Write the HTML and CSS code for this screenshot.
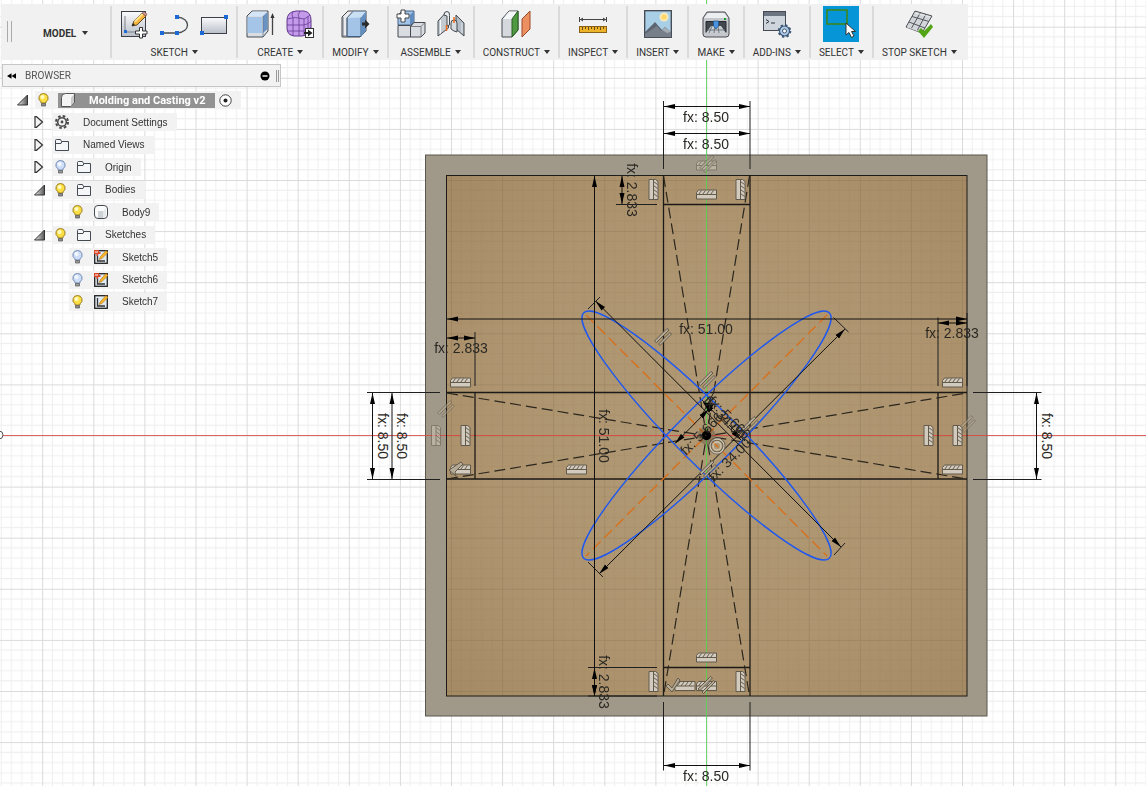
FILE: index.html
```html
<!DOCTYPE html>
<html lang="en">
<head>
    <meta charset="UTF-8">
    <meta name="viewport" content="width=device-width, initial-scale=1.0">
    <title>Molding and Casting v2</title>
    <link rel="stylesheet" href="styles.css">
</head>
<body>
    <!-- Drawing canvas -->
    <svg class="canvas" viewBox="0 0 1146 786" preserveAspectRatio="xMidYMid slice">
        <defs>
            <pattern id="grid" x="42.2" y="26.7" width="51.1" height="51.1" patternUnits="userSpaceOnUse">
                <path class="grid-minor" d="M10.2 0V51.1M20.4 0V51.1M30.7 0V51.1M40.9 0V51.1M0 10.2H51.1M0 20.4H51.1M0 30.7H51.1M0 40.9H51.1"/>
                <path class="grid-major" d="M.5 0V51.1M0 .5H51.1"/>
            </pattern>
            <pattern id="grid-body" x="42.2" y="26.7" width="51.1" height="51.1" patternUnits="userSpaceOnUse">
                <path class="body-minor" d="M10.2 0V51.1M20.4 0V51.1M30.7 0V51.1M40.9 0V51.1M0 10.2H51.1M0 20.4H51.1M0 30.7H51.1M0 40.9H51.1"/>
                <path class="body-major" d="M.5 0V51.1M0 .5H51.1"/>
            </pattern>
            <radialGradient id="wood" cx=".5" cy=".5" r=".72">
                <stop offset="0" stop-color="#b09975"/>
                <stop offset=".6" stop-color="#ae9570"/>
                <stop offset="1" stop-color="#a48a64"/>
            </radialGradient>
            <marker id="arrow" viewBox="0 0 11 6" refX="11" refY="3" markerWidth="11" markerHeight="6" markerUnits="userSpaceOnUse" orient="auto-start-reverse">
                <path d="M0 .5 11 3 0 5.5z"/>
            </marker>
            <g id="hatch">
                <path class="hatch-back" d="M-10 4.500V-2L-8-4.500H10V4.500z"/>
                <path class="hatch-line" d="M-9.500 0H9.500M-8 0l3-4M-4 0l3-4M0 0l3-4M4 0l3-4"/>
            </g>
            <g id="parallel" class="parallel">
                <path d="M-8.500 4 4-8.500 6-7-6.500 5.500z"/>
                <path d="M-4.500 7 7-4.500 8.500-3-3 8.500z"/>
            </g>
        </defs>

        <rect width="1146" height="786" fill="#fff"/>
        <rect width="1146" height="786" fill="url(#grid)"/>

        <rect x="425.500" y="155" width="561.500" height="561" fill="#a09989" stroke="#5b574d"/>
        <rect x="446" y="175.500" width="521" height="520.500" fill="url(#wood)"/>
        <rect x="446" y="175.500" width="521" height="520.500" fill="url(#grid-body)"/>

        <path class="axis-x" d="M0 435.500H1146"/>
        <path class="axis-y" d="M706.500 0V786"/>
        <circle cx="-1" cy="435" r="4" fill="#fff" stroke="#555"/>

        <!-- sketch profiles -->
        <g class="profile">
            <rect class="outline" x="446.500" y="175.500" width="520.500" height="520.500"/>
            <path d="M663.500 175V696M750 175V696M446 392.500H967M446 479H967"/>
            <path d="M663 204.500H750M663 667.500H750M475 392V479M938 392V479"/>
        </g>
        <g class="construction">
            <path d="M663.500 176 749.500 696M749.500 176 663.500 696M447 393 967 479M447 479 967 393"/>
        </g>
        <g class="ellipse-axis">
            <path d="M586 315 827 556M827 315 586 556"/>
        </g>
        <g class="ellipse">
            <ellipse cx="706.500" cy="435.500" rx="173.700" ry="29" transform="rotate(45 706.500 435.500)"/>
            <ellipse cx="706.500" cy="435.500" rx="173.700" ry="29" transform="rotate(-45 706.500 435.500)"/>
        </g>

        <!-- extension lines -->
        <g class="extension">
            <path d="M663.500 101V169M750 101V169M663.500 702V770.500M750 702V770.500"/>
            <path d="M367 392.500H440M367 479.500H440M973 392.500H1041.500M973 479.500H1041.500"/>
            <path d="M616 175.500H657M616 204.500H657M588 667.500H657M588 696H657"/>
            <path d="M475 332V386M938 317.500V386M967 313V386"/>
            <path d="M588 309 600 297M834 555 845 543M588 562 603 577M833.500 317.500 848.500 332"/>
            <path d="M702 400 712 410M702 415 714 392M729 425 745 441M700 475 712 463"/>
        </g>
        <!-- dimension lines -->
        <g class="dimension">
            <path d="M664 106.500H750"/>
            <path d="M664 133.500H750"/>
            <path d="M664 765.500H750"/>
            <path d="M594.500 176V696"/>
            <path d="M447 319H967"/>
            <path d="M622 176V204"/>
            <path d="M594.500 668V696"/>
            <path d="M447 338H475"/>
            <path d="M938 323H967"/>
            <path d="M372.500 393V479"/>
            <path d="M392 393V479"/>
            <path d="M1036.500 393V479"/>
            <path d="M595.500 301 841 547"/>
            <path d="M599 574 845 329"/>
            <path d="M675 443.500 709 409"/>
            <path d="M704 402 741 440"/>
        </g>
        <path d="M703 402 714 404 709 413z"/>

        <!-- constraints -->
        <g opacity=".5">
            <use href="#hatch" transform="translate(706.500 165.500)"/>
            <use href="#parallel" transform="translate(708 164)"/>
            <use href="#hatch" transform="translate(436 435.500) rotate(90)"/>
            <use href="#parallel" transform="translate(446 409)"/>
            <use href="#parallel" transform="translate(967 424)"/>
        </g>
        <use href="#parallel" transform="translate(663 337)"/>
        <use href="#parallel" transform="translate(707 380)"/>
        <use href="#parallel" transform="translate(750 425)"/>
        <use href="#parallel" transform="translate(708 469)"/>
        <use href="#hatch" transform="translate(706.500 194.500)"/>
        <use href="#hatch" transform="translate(706.500 657.500)"/>
        <use href="#hatch" transform="translate(685 686)"/>
        <use href="#hatch" transform="translate(706.500 686)"/>
        <use href="#parallel" transform="translate(706.500 685)"/>
        <path class="parallel" d="M666 686 672 692 680 680 678 678 672 688 668 684z"/>
        <use href="#hatch" transform="translate(460.500 382.500)"/>
        <use href="#hatch" transform="translate(460.500 469.500)"/>
        <path class="parallel" d="M449 470 456 476 455 472 463 464 461 462z"/>
        <use href="#hatch" transform="translate(576.500 469.500)"/>
        <use href="#hatch" transform="translate(952.500 382.500)"/>
        <use href="#hatch" transform="translate(952.500 469.500)"/>
        <use href="#hatch" transform="translate(653.500 189.500) rotate(90)"/>
        <use href="#hatch" transform="translate(740.500 189.500) rotate(90)"/>
        <use href="#hatch" transform="translate(653.500 681.500) rotate(90)"/>
        <use href="#hatch" transform="translate(740.500 681.500) rotate(90)"/>
        <use href="#hatch" transform="translate(465.500 435.500) rotate(90)"/>
        <use href="#hatch" transform="translate(928.500 435.500) rotate(90)"/>
        <use href="#hatch" transform="translate(957.500 435.500) rotate(90)"/>
        <circle class="concentric-edge" cx="717" cy="446" r="7"/>
        <g class="concentric">
            <circle cx="717" cy="446" r="7"/>
            <circle cx="717" cy="446" r="4"/>
        </g>
        <circle cx="706.500" cy="435.500" r="9" fill="#000" opacity=".2"/>
        <circle cx="706.500" cy="435.500" r="4.700"/>

        <!-- dimension values -->
        <g class="value">
            <text x="706" y="122">fx: 8.50</text>
            <text x="706" y="149">fx: 8.50</text>
            <text x="706" y="781">fx: 8.50</text>
            <text x="706" y="334">fx: 51.00</text>
            <text x="952" y="338">fx: 2.833</text>
            <text x="461" y="353">fx: 2.833</text>
            <text transform="translate(627 190) rotate(90)">fx: 2.833</text>
            <text transform="translate(599 682) rotate(90)">fx: 2.833</text>
            <text transform="translate(599 436) rotate(90)">fx: 51.00</text>
            <text transform="translate(378 436) rotate(90)">fx: 8.50</text>
            <text transform="translate(397 436) rotate(90)">fx: 8.50</text>
            <text transform="translate(1042 436) rotate(90)">fx: 8.50</text>
            <text transform="translate(705 437) rotate(-45)">fx: 5.666</text>
            <text transform="translate(733 463) rotate(-45)">fx: 34.00</text>
            <text transform="translate(726 421) rotate(45)">fx: 5.666</text>
            <text transform="translate(721 421) rotate(45)">fx: 34.00</text>
        </g>
    </svg>

    <!-- Toolbar -->
    <div class="toolbar">
        <div class="grip"></div>
        <button class="workspace">MODEL<span class="caret"></span></button>

        <div class="group">
            <div class="tools">
                <button class="tool" aria-label="Create Sketch">
                    <svg viewBox="0 0 28 28">
                        <rect x="1.500" y="1.500" width="24" height="25" fill="url(#steel)" stroke="#3c3f45"/>
                        <path d="M5 6v16h15" fill="none" stroke="#7d8187"/>
                        <rect x="4" y="20" width="3" height="3" fill="#1d69d5"/>
                        <path d="M12 16l2-5 8-8 4 3-9 9z" fill="#f6b33c" stroke="#5b4a2c"/>
                        <path d="M14 11l8-8 1.500 1.500-8 8z" fill="#ffe28a"/>
                        <path d="M22 3l2-1 3 2-1 2z" fill="#e59ba0" stroke="#6d4b4c" stroke-width=".6"/>
                        <path d="M12 16l1-3 2 2z" fill="#222"/>
                        <path d="M19.500 17.500h3v3.500h4.500v3h-4.500v4h-3v-4h-4v-3h4z" fill="#fff" stroke="#333"/>
                    </svg>
                </button>
                <button class="tool" aria-label="Line">
                    <svg viewBox="0 0 28 28">
                        <path d="M2 23h15C31 22 31 8 17 7" fill="none" stroke="#494d52" stroke-width="1.300"/>
                        <path d="M0 21h4v4H0zM15 21h4v4h-4zM15 5h4v4h-4z" fill="#1d69d5"/>
                    </svg>
                </button>
                <button class="tool" aria-label="Rectangle">
                    <svg viewBox="0 0 28 28">
                        <rect x="1.500" y="7.500" width="25" height="16" fill="url(#steel)" stroke="#3c3f45"/>
                        <path d="M0 21h4v4H0zM24 5h4v4h-4z" fill="#1d69d5"/>
                    </svg>
                </button>
            </div>
            <button class="menu">SKETCH<span class="caret"></span></button>
        </div>

        <div class="group">
            <div class="tools">
                <button class="tool" aria-label="Extrude">
                    <svg viewBox="0 0 28 28">
                        <path d="M1 6 6 1h16v20l-5 6H1z" fill="#d9dde2" stroke="#454b54"/>
                        <path d="M1.500 7H16v16H1.500z" fill="#a4c5e8"/>
                        <path d="M2 6 6.500 1.500H21L16.500 6z" fill="#d3e5f6"/>
                        <path d="M17 6 21.500 2v17L17 23z" fill="#6993c2"/>
                        <path d="M17 6v21" stroke="#5a7494" stroke-width=".7"/>
                        <path d="M26.500 25V6" stroke="#444" stroke-width="1.300"/>
                        <path d="M24.500 8l2-5 2 5z" fill="#333"/>
                    </svg>
                </button>
                <button class="tool" aria-label="Create Form">
                    <svg viewBox="0 0 28 28">
                        <path d="M1 10Q1 2 10 1h8q7 1 7 9v8q-1 7-9 8H8q-7-1-7-8z" fill="#c49aea" stroke="#60368b"/>
                        <path d="M1 9Q9 6 18 9v17M18 9q4-2 6-4M7 1.500Q5 4 7 8v18M14 1q-3 4-1 7v18M1 15h17q5-1 7-4M1 21h17q5-1 7-4M22 6v17" fill="none" stroke="#70439f" stroke-width=".9"/>
                        <rect x="19.500" y="18.500" width="8" height="9" fill="#fff" stroke="#333"/>
                        <path d="M18 22h4v-2.500l4.500 3.500-4.500 3.500V24h-4z" fill="#222"/>
                    </svg>
                </button>
            </div>
            <button class="menu">CREATE<span class="caret"></span></button>
        </div>

        <div class="group">
            <div class="tools">
                <button class="tool" aria-label="Press Pull">
                    <svg viewBox="0 0 28 28">
                        <path d="M1 7 7 1h18v20l-6 6H1z" fill="#e9ebee" stroke="#444"/>
                        <path d="M6 8 12 1.500h13L20 7.500V26.500H6z" fill="#a3c4e7" stroke="#3f5e80"/>
                        <path d="M20 7.500l5-6V21l-5 5.500z" fill="#638ebf"/>
                        <path d="M6 8 12 1.500h13L20 7.500z" fill="#c9dff4"/>
                        <path d="M2 7v19h4V8l6-6.500" fill="none" stroke="#56606c" stroke-width=".8"/>
                        <path d="M21 12.500h3v-3l4.500 4.500-4.500 4.500v-3h-3z" fill="#2b2b2b"/>
                    </svg>
                </button>
            </div>
            <button class="menu">MODIFY<span class="caret"></span></button>
        </div>

        <div class="group">
            <div class="tools">
                <button class="tool" aria-label="New Component">
                    <svg viewBox="0 0 28 28">
                        <path d="M1 5l4-4h12v11l-3 3H1z" fill="#a0c4e9" stroke="#46617f"/>
                        <path d="M13 5l4-4v11l-4 3z" fill="#5f8cbd"/>
                        <path d="M1 15.500h12.500v11.500H1z" fill="#d9dce1" stroke="#464a50"/>
                        <path d="M13.500 16.500 17 12.500h11v10.500l-4 4H13.500z" fill="#d9dce1" stroke="#464a50"/>
                        <path d="M13.500 16.500H24V27M24 16.500l4-4" fill="none" stroke="#63676d" stroke-width=".8"/>
                        <path d="M4 0h4v4h4v4H8v4H4V8H0V4h4z" fill="#fff" stroke="#444"/>
                    </svg>
                </button>
                <button class="tool" aria-label="Joint">
                    <svg viewBox="0 0 28 28">
                        <path d="M1 11 8 3.500 11.500 5v13L1 26z" fill="#c3cad0" stroke="#444a50"/>
                        <path d="M3.500 10v13.500" stroke="#f5f7f8"/>
                        <path d="M7 5q0-3.500 3-3.500t2.500 4V15l-2.500 1V6z" fill="#edf0f2" stroke="#444a50"/>
                        <path d="M19 5l8 8v13l-8-7z" fill="#b4bdc5" stroke="#444a50"/>
                        <path d="M14 13q0-3 3-3t3 3v9l-3-1-3-2z" fill="#d6dbdf" stroke="#444a50"/>
                        <path d="M25 13v10" stroke="#e4e8ea"/>
                        <path d="M17 7v6M9.500 15v6" stroke="#ef6c1a" stroke-width="1.500"/>
                    </svg>
                </button>
            </div>
            <button class="menu">ASSEMBLE<span class="caret"></span></button>
        </div>

        <div class="group">
            <div class="tools">
                <button class="tool" aria-label="Offset Plane">
                    <svg viewBox="0 0 28 28">
                        <path d="M0 9 7 1h9v19l-6 7H0z" fill="#d5d8dc" stroke="#464a50"/>
                        <path d="M1 9 7 1.500h8L10 9z" fill="#f5f6f7"/>
                        <path d="M10 9l6-8v19l-6 7z" fill="#4f9940" stroke="#285c20"/>
                        <path d="M20 9l8-8v18l-8 8z" fill="#ec9062" stroke="#9a4928"/>
                    </svg>
                </button>
            </div>
            <button class="menu">CONSTRUCT<span class="caret"></span></button>
        </div>

        <div class="group">
            <div class="tools">
                <button class="tool" aria-label="Measure">
                    <svg viewBox="0 0 28 28">
                        <path d="M.500 7v5M27.500 7v5M1 9.500h26" stroke="#444"/>
                        <path d="M1 9.500l3-2v4zM27 9.500l-3-2v4z" fill="#444"/>
                        <rect x=".500" y="16.500" width="27" height="6" fill="#eeb429" stroke="#8b6017"/>
                        <path d="M3.500 17v3M6.500 17v2M9.500 17v3M12.500 17v2M15.500 17v3M18.500 17v2M21.500 17v3M24.500 17v2" stroke="#6b4c16"/>
                    </svg>
                </button>
            </div>
            <button class="menu">INSPECT<span class="caret"></span></button>
        </div>

        <div class="group">
            <div class="tools">
                <button class="tool" aria-label="Insert Image">
                    <svg viewBox="0 0 28 28">
                        <rect x=".700" y=".700" width="26.600" height="26.600" fill="#a9cfe6" stroke="#40464d" stroke-width="1.300"/>
                        <circle cx="20" cy="7" r="4.500" fill="#f8eaba"/>
                        <circle cx="20" cy="7" r="2.600" fill="#ffd766"/>
                        <path d="M1 22 11 12l7 8 3-3 6 5v5H1z" fill="#5d6572"/>
                        <path d="M1 24l12-8 4 5 4-4 6 6v4H1z" fill="#777f8b"/>
                        <path d="M18 20l3-3 6 5-4 1z" fill="#a3abb4"/>
                    </svg>
                </button>
            </div>
            <button class="menu">INSERT<span class="caret"></span></button>
        </div>

        <div class="group">
            <div class="tools">
                <button class="tool" aria-label="3D Print">
                    <svg viewBox="0 0 28 28">
                        <path d="M1 8 5 2h18l4 6v16q0 3-3 3H4q-3 0-3-3z" fill="#c4c7cb" stroke="#484b50"/>
                        <path d="M2 8 6 3h16l4 5z" fill="#eceef0"/>
                        <path d="M4 11.500h20v11H4z" fill="#42484f" stroke="#25292e"/>
                        <path d="M4 23l5-7h10l5 7z" fill="#c9ced3"/>
                        <path d="M7 23l3-7M12 23l1-7M17 23l-1-7M5 20h18" stroke="#5e656d" stroke-width=".8"/>
                        <path d="M11.500 11h5v5l-2.500 3-2.500-3z" fill="#4a94df" stroke="#1d4d86" stroke-width=".7"/>
                        <rect x="22" y="8" width="2" height="2" fill="#19a42c"/>
                    </svg>
                </button>
            </div>
            <button class="menu">MAKE<span class="caret"></span></button>
        </div>

        <div class="group">
            <div class="tools">
                <button class="tool" aria-label="Scripts and Add-Ins">
                    <svg viewBox="0 0 28 28">
                        <rect x=".500" y="1.500" width="22" height="19" fill="#cfd5dc" stroke="#454a52"/>
                        <rect x="1" y="2" width="21" height="4" fill="#6c7581"/>
                        <path d="M3 9.500l3 2-3 2M8 13h4" fill="none" stroke="#30353b"/>
                        <circle cx="21.500" cy="21" r="5" fill="#b1cbe5" stroke="#3d5878" stroke-width="1.200"/>
                        <circle cx="21.500" cy="21" r="5.800" fill="none" stroke="#3d5878" stroke-width="2" stroke-dasharray="2.300 2.250"/>
                        <circle cx="21.500" cy="21" r="2" fill="#fff" stroke="#3d5878"/>
                    </svg>
                </button>
            </div>
            <button class="menu">ADD-INS<span class="caret"></span></button>
        </div>

        <div class="group">
            <div class="tools">
                <button class="tool selected" aria-label="Select">
                    <svg viewBox="0 0 36 36">
                        <rect x="4" y="4" width="20" height="14" fill="none" stroke="#3d861c" stroke-width="1.600"/>
                        <path d="M23 17v12l3-2.500 2.500 5 2.500-1.500-2.500-4.500h4z" fill="#fff" stroke="#333"/>
                    </svg>
                </button>
            </div>
            <button class="menu">SELECT<span class="caret"></span></button>
        </div>

        <div class="group">
            <div class="tools">
                <button class="tool" aria-label="Stop Sketch">
                    <svg viewBox="0 0 28 28">
                        <path d="M10 1 27 6 17 23 1 17z" fill="#d2d5d9" stroke="#4c5055"/>
                        <path d="M15.500 2.500 6 19M21 4 12 21M7 6.500l17 5M4 12l16 6" stroke="#54585e"/>
                        <path d="M10.500 3 25 7M2 17l14 5" stroke="#f5f6f7" stroke-width=".7"/>
                        <path d="M13 21l3-3 3 3 7-7 2 3-9 11z" fill="#54a516"/>
                    </svg>
                </button>
            </div>
            <button class="menu">STOP SKETCH<span class="caret"></span></button>
        </div>
    </div>

    <!-- Browser panel -->
    <div class="browser">
        <div class="browser-header">
            <svg class="rewind" viewBox="0 0 10 6"><path d="M0 3l5-3v6zM5 3l5-3v6z"/></svg>
            <span class="browser-title">BROWSER</span>
            <svg class="minus" viewBox="0 0 10 10"><circle cx="5" cy="5" r="4.500"/><path d="M2.500 5h5" stroke="#fff" stroke-width="1.400"/></svg>
            <span class="handle"></span>
        </div>

        <ul class="tree">
            <li class="row root">
                <svg class="toggle"><use href="#open"/></svg>
                <div class="item">
                    <svg class="bulb"><use href="#bulb-on"/></svg>
                    <div class="title">
                        <svg class="icon" viewBox="0 0 14 14"><path d="M.500 4.500Q.500.500 4.500.500h9v9l-4 4h-9z" fill="#f4f4f4" stroke="#555"/><path d="M10 4.500V13l3-3.500V1.500z" fill="#c9c9c9"/></svg>
                        Molding and Casting v2
                    </div>
                    <svg class="target" viewBox="0 0 13 13"><circle cx="6.500" cy="6.500" r="5.700" fill="#fff" stroke="#444"/><circle cx="6.500" cy="6.500" r="2" fill="#222"/></svg>
                </div>
            </li>
            <li class="row">
                <svg class="toggle"><use href="#closed"/></svg>
                <div class="item">
                    <svg class="icon" viewBox="0 0 14 14"><circle cx="7" cy="7" r="4.300" fill="none" stroke="#4a4a4a" stroke-width="1.600"/><circle cx="7" cy="7" r="6" fill="none" stroke="#4a4a4a" stroke-width="2" stroke-dasharray="2.600 2.110"/><circle cx="7" cy="7" r="1.400" fill="#4a4a4a"/></svg>
                    Document Settings
                </div>
            </li>
            <li class="row">
                <svg class="toggle"><use href="#closed"/></svg>
                <div class="item">
                    <svg class="icon"><use href="#folder"/></svg>
                    Named Views
                </div>
            </li>
            <li class="row">
                <svg class="toggle"><use href="#closed"/></svg>
                <div class="item">
                    <svg class="bulb"><use href="#bulb-off"/></svg>
                    <svg class="icon"><use href="#folder"/></svg>
                    Origin
                </div>
            </li>
            <li class="row">
                <svg class="toggle"><use href="#open"/></svg>
                <div class="item">
                    <svg class="bulb"><use href="#bulb-on"/></svg>
                    <svg class="icon"><use href="#folder"/></svg>
                    Bodies
                </div>
            </li>
            <li class="row child">
                <div class="item">
                    <svg class="bulb"><use href="#bulb-on"/></svg>
                    <svg class="icon" viewBox="0 0 14 14"><rect x=".500" y=".500" width="13" height="13" rx="3.500" fill="#fbfbfb" stroke="#444b52"/><path d="M4 6h5v7H4z" fill="#cdd2d6"/><path d="M9 6l3-3v8l-3 2z" fill="#e6e9eb"/></svg>
                    Body9
                </div>
            </li>
            <li class="row">
                <svg class="toggle"><use href="#open"/></svg>
                <div class="item">
                    <svg class="bulb"><use href="#bulb-on"/></svg>
                    <svg class="icon"><use href="#folder"/></svg>
                    Sketches
                </div>
            </li>
            <li class="row child">
                <div class="item">
                    <svg class="bulb"><use href="#bulb-off"/></svg>
                    <svg class="icon"><use href="#sketch"/><use href="#pin"/></svg>
                    Sketch5
                </div>
            </li>
            <li class="row child">
                <div class="item">
                    <svg class="bulb"><use href="#bulb-off"/></svg>
                    <svg class="icon"><use href="#sketch"/><use href="#pin"/></svg>
                    Sketch6
                </div>
            </li>
            <li class="row child">
                <div class="item">
                    <svg class="bulb"><use href="#bulb-on"/></svg>
                    <svg class="icon"><use href="#sketch"/></svg>
                    Sketch7
                </div>
            </li>
        </ul>
    </div>

    <!-- Shared icon shapes -->
    <svg class="shapes">
        <defs>
            <linearGradient id="steel" x1="0" y1="0" x2="0" y2="1">
                <stop offset="0" stop-color="#fafbfc"/>
                <stop offset="1" stop-color="#b9bec8"/>
            </linearGradient>
            <linearGradient id="dark" x1="0" y1="0" x2="1" y2="0">
                <stop offset="0" stop-color="#eee"/>
                <stop offset="1" stop-color="#555"/>
            </linearGradient>
            <g id="open"><path d="M10.500 1v10H.500z" fill="url(#dark)" stroke="#333"/></g>
            <g id="closed"><path d="M1 .700h1.500l6 5.300-6 5.300H1z" fill="#f2f2f2" stroke="#333" stroke-width="1.200"/></g>
            <g id="bulb-on">
                <path d="M5.500.500a4.500 4.500 0 0 1 2.500 8.300V10H3V8.800A4.500 4.500 0 0 1 5.500.500z" fill="#fcdf45" stroke="#9b7c25"/>
                <circle cx="4.500" cy="4" r="2" fill="#fffbc6"/>
                <path d="M3.500 10.500h4v2.500h-4z" fill="#8b8b8b" stroke="#555" stroke-width=".7"/>
            </g>
            <g id="bulb-off">
                <path d="M5.500.500a4.500 4.500 0 0 1 2.500 8.300V10H3V8.800A4.500 4.500 0 0 1 5.500.500z" fill="#cfdffa" stroke="#7188b3"/>
                <circle cx="4.500" cy="4" r="2" fill="#f3f8ff"/>
                <path d="M3.500 10.500h4v2.500h-4z" fill="#9b9b9b" stroke="#555" stroke-width=".7"/>
            </g>
            <g id="folder"><path d="M.500 12.500V2.500q0-1 1-1h4l1 2h7v9zM.500 5.500H6l1-2" fill="#f5f6f7" stroke="#454b54"/></g>
            <g id="sketch">
                <rect x=".700" y=".700" width="12.600" height="12.600" fill="#e2eaf2" stroke="#222" stroke-width="1.300"/>
                <path d="M3.500 3v8H11" fill="none" stroke="#333" stroke-width="1.300"/>
                <path d="M5 9.500l1.500-3L12 .500 14 2.500 8 8.500z" fill="#f9b428" stroke="#9c6414" stroke-width=".5"/>
            </g>
            <g id="pin"><path d="M0 0h5v2h1.500v2H4v2H2.500V4H0z" fill="#d8462a"/><path d="M1 2h3" stroke="#fff"/></g>
        </defs>
    </svg>
</body>
</html>
```
FILE: styles.css
```css
body {
    margin: 0;
    min-height: 100vh;
    font-family: "Liberation Sans", Arial, sans-serif;
    font-size: 10px;
    color: #333;
    overflow: hidden;
}

button {
    padding: 0;
    border: none;
    background: none;
    color: inherit;
    cursor: pointer;
}

svg {
    display: block;
    flex-shrink: 0;
}

/* Canvas lies under the panels */
.canvas {
    position: absolute;
    inset: 0;
    z-index: -1;
    width: 100%;
    height: 100%;
}

.shapes {
    width: 0;
    height: 0;
}

.grid-minor {
    stroke: #efefef;
}

.grid-major {
    stroke: #dadada;
}

.body-minor {
    stroke: #8a6c42;
    stroke-opacity: 0.12;
}

.body-major {
    stroke: #6a4f2c;
    stroke-opacity: 0.18;
}

.axis-x {
    stroke: #e0403c;
    stroke-opacity: 0.8;
}

.axis-y {
    stroke: #55d855;
    stroke-opacity: 0.85;
}

.profile {
    fill: none;
    stroke: #1c1a16;
    stroke-width: 1.3;
}

.profile .outline {
    stroke-width: 1;
}

.construction {
    fill: none;
    stroke: #2b261e;
    stroke-width: 1.2;
    stroke-dasharray: 11 5;
}

.ellipse-axis {
    fill: none;
    stroke: #d8701c;
    stroke-width: 1.4;
    stroke-dasharray: 11 5;
}

.ellipse {
    fill: none;
    stroke: #1f58f0;
    stroke-width: 1.4;
}

.extension {
    fill: none;
    stroke: #1f1f1f;
}

.dimension {
    stroke: #111;
}

.dimension path {
    marker-start: url(#arrow);
    marker-end: url(#arrow);
}

.hatch-back {
    fill: #d2cbbd;
    stroke: #625a4c;
}

.hatch-line {
    fill: none;
    stroke: #625a4c;
}

.parallel {
    fill: #b5aa95;
    stroke: #5a5244;
    stroke-width: 0.9;
}

.concentric {
    fill: none;
    stroke: #cfc6b4;
    stroke-width: 1.3;
}

.concentric-edge {
    fill: none;
    stroke: #5f5749;
    stroke-width: 3;
}

.value {
    font-size: 14px;
    fill: #2a2823;
    text-anchor: middle;
}

/* Toolbar */
.toolbar {
    display: flex;
    width: max-content;
    height: 56px;
    margin: 4px 0 0 2px;
    padding-right: 3px;
    background-color: #f1f1f1;
    font-family: Roboto, sans-serif;
}

.grip {
    width: 3px;
    height: 21px;
    margin: 17px 0 0 5px;
    border: 1px solid #aaa;
    border-width: 0 1px;
}

.workspace {
    display: flex;
    align-items: center;
    gap: 6px;
    padding: 2px 22px 0 31px;
    font: bold 10px Roboto, sans-serif;
}

.caret {
    border: 3px solid transparent;
    border-top: 4px solid #333;
    border-bottom: 0;
}

.group {
    display: flex;
    flex-direction: column;
    align-items: center;
    margin: 2px 0;
    padding: 0 8px;
    border-left: 2px solid #dadada;
}

.tools {
    display: flex;
    align-items: center;
    gap: 12px;
    height: 36px;
}

.tool svg {
    width: 28px;
    height: 28px;
    overflow: visible;
}

.tool.selected {
    background-color: #0696d7;
}

.tool.selected svg {
    width: 36px;
    height: 36px;
}

.menu {
    display: flex;
    align-items: center;
    gap: 4px;
    height: 12px;
    margin-top: 4px;
    font: 10px Roboto, sans-serif;
    white-space: nowrap;
}

/* Browser */
.browser {
    width: 279px;
    margin: 4px 0 0 2px;
}

.browser-header {
    display: flex;
    align-items: center;
    height: 21px;
    padding: 0 1px 0 4px;
    border: 1px solid #c6c6c6;
    background-color: #f2f2f2;
    font-family: Roboto, sans-serif;
    color: #555;
}

.rewind {
    width: 9px;
    height: 6px;
}

.browser-title {
    flex: 1;
    margin-left: 9px;
}

.minus {
    width: 10px;
    height: 10px;
}

.handle {
    width: 1px;
    height: 12px;
    margin-left: 6px;
    border: 1px solid #999;
    border-width: 0 1px;
}

.tree {
    display: flex;
    flex-direction: column;
    justify-content: space-between;
    height: 220px;
    margin: 4px 0 0;
    padding: 0;
    list-style: none;
}

.row {
    display: flex;
    align-items: center;
    gap: 7px;
    padding-left: 32px;
}

.root {
    padding-left: 15px;
}

.child {
    padding-left: 67px;
}

.toggle {
    width: 11px;
    height: 12px;
}

.item {
    display: flex;
    align-items: center;
    height: 18px;
    padding: 0 9px 0 3px;
    background-color: #f2f2f2;
}

.bulb {
    width: 11px;
    height: 14px;
    margin-right: 11px;
}

.icon {
    width: 14px;
    height: 14px;
    margin-right: 14px;
}

.title {
    display: flex;
    align-items: center;
    height: 15px;
    padding: 0 10px 0 3px;
    background-color: #929292;
    font: bold 11px Roboto, sans-serif;
    color: #fff;
}

.root .bulb {
    margin-right: 9px;
}

.target {
    width: 13px;
    height: 13px;
    margin-left: 4px;
}
```
